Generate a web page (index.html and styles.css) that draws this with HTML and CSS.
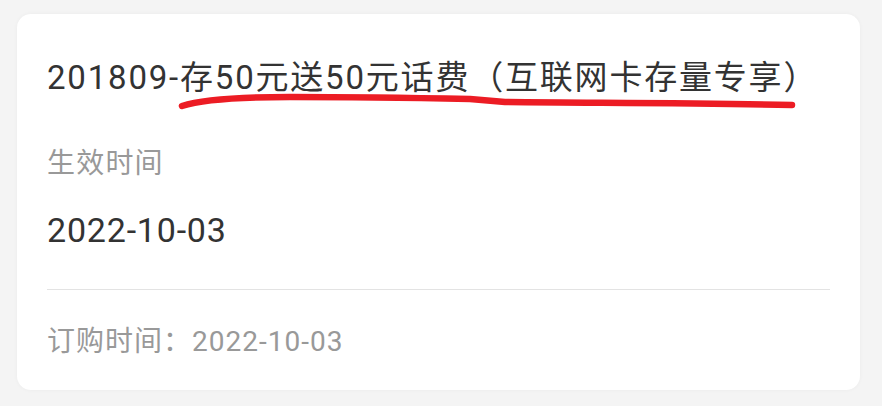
FILE: index.html
```html
<!DOCTYPE html>
<html lang="zh-CN">
<head>
  <meta charset="UTF-8">
  <meta name="viewport" content="width=device-width, initial-scale=1.0">
  <title>订购详情</title>
  <link rel="stylesheet" href="styles.css">
</head>
<body>
  <div class="card">
    <div class="title-wrap">
      <h1 class="title">201809-存50元送50元话费（互联网卡存量专享）</h1>
      <!-- hand drawn mark under the product name -->
      <svg class="mark" viewBox="0 0 882 120" width="882" height="120">
        <path d="M182,106 C200,100 235,97 290,97 C360,97 420,98 470,99 L505,102 C600,103 700,103 792,105"
              fill="none" stroke="#ec1c24" stroke-width="6.5" stroke-linecap="round" stroke-linejoin="round"/>
      </svg>
    </div>
    <div class="label">生效时间</div>
    <div class="value">2022-10-03</div>
    <div class="divider"></div>
    <div class="meta">订购时间：2022-10-03</div>
  </div>
</body>
</html>
```

FILE: styles.css
```css
body {
  margin: 0;
  padding: 14px 22px 17px 17px;
  background-color: #f4f4f4;
  font-family: Roboto, "Noto Sans CJK SC", sans-serif;
}

.card {
  background-color: #fff;
  border-radius: 14px;
  padding: 42px 30px 28px 30px;
  box-shadow: 0 0 4px rgba(0, 0, 0, 0.04);
}

.title-wrap {
  position: relative;
}

.title {
  margin: 0;
  font-size: 33px;
  font-weight: normal;
  line-height: 44px;
  letter-spacing: 1.8px;
  color: #333;
}

.mark {
  position: absolute;
  left: -47px;
  top: -56px;
  pointer-events: none;
}

.label {
  margin-top: 44px;
  font-size: 28px;
  line-height: 40px;
  letter-spacing: 1.2px;
  color: #999;
}

.value {
  margin-top: 24px;
  font-size: 34px;
  line-height: 44px;
  letter-spacing: 0.8px;
  color: #333;
}

.divider {
  margin-top: 37px;
  height: 1px;
  background-color: #e3e3e3;
}

.meta {
  margin-top: 32px;
  font-size: 28px;
  line-height: 40px;
  letter-spacing: 1px;
  color: #999;
}
```
